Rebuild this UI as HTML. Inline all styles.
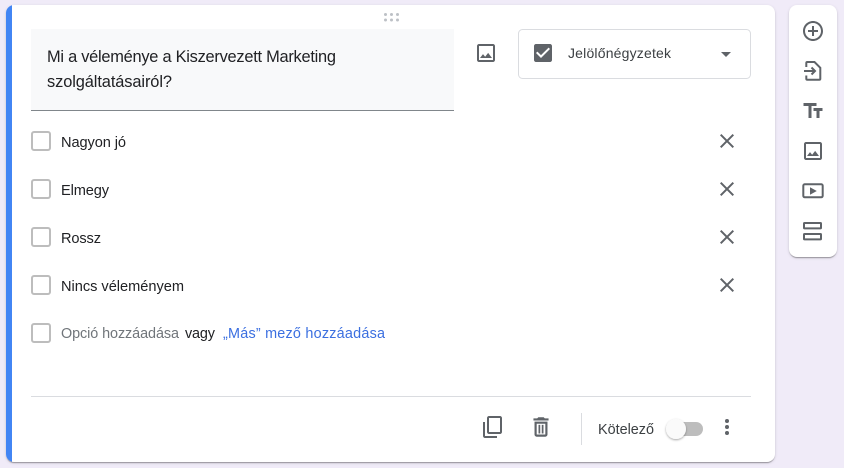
<!DOCTYPE html>
<html lang="hu"><head><meta charset="utf-8"><title>Kérdés</title>
<style>
html,body{margin:0;padding:0;width:844px;height:468px;overflow:hidden;background:#f0ebf8}
.card{position:absolute;left:6px;top:5px;width:769px;height:457px;background:#fff;border-radius:8px;overflow:hidden;box-shadow:0 2px 1px -1px rgba(0,0,0,.2),0 1px 1px 0 rgba(0,0,0,.14),0 1px 3px 0 rgba(0,0,0,.12)}
.blue{position:absolute;left:0;top:0;bottom:0;width:6px;background:#4285f4}
.side{position:absolute;left:789px;top:5px;width:48px;height:252px;background:#fff;border-radius:8px;box-shadow:0 2px 1px -1px rgba(0,0,0,.2),0 1px 1px 0 rgba(0,0,0,.14),0 1px 3px 0 rgba(0,0,0,.12)}
svg{position:absolute;left:0;top:0}
text{font-family:"Liberation Sans",sans-serif}
.o{font-size:14.6px;fill:#202124}
</style></head><body>
<div class="card"><div class="blue"></div></div>
<div class="side"></div>
<svg width="844" height="468" viewBox="0 0 844 468" xmlns="http://www.w3.org/2000/svg">
<defs>
<path id="img" d="M19 5v14H5V5h14m0-2H5c-1.1 0-2 .9-2 2v14c0 1.1.9 2 2 2h14c1.1 0 2-.9 2-2V5c0-1.1-.9-2-2-2zm-4.86 8.86l-3 3.87L9 13.14 6 17h12l-3.86-5.14z"/>
<path id="x" d="M19 6.41L17.59 5 12 10.59 6.41 5 5 6.41 10.59 12 5 17.59 6.41 19 12 13.41 17.59 19 19 17.59 13.41 12z"/>
<filter id="sh" x="-50%" y="-50%" width="200%" height="200%"><feDropShadow dx="0" dy="1" stdDeviation="1" flood-color="#000" flood-opacity=".35"/></filter>
</defs>
<g fill="#bdc1c6"><circle cx="385.5" cy="14.5" r="1.5"/><circle cx="391.5" cy="14.5" r="1.5"/><circle cx="397.5" cy="14.5" r="1.5"/><circle cx="385.5" cy="20" r="1.5"/><circle cx="391.5" cy="20" r="1.5"/><circle cx="397.5" cy="20" r="1.5"/></g>
<rect x="31" y="29" width="423" height="81" fill="#f8f9fa"/>
<rect x="31" y="110" width="423" height="1" fill="#80868b"/>
<text x="47" y="62" font-size="16.4" fill="#202124" textLength="289">Mi a véleménye a Kiszervezett Marketing</text>
<text x="47" y="87" font-size="16.4" fill="#202124" textLength="125">szolgáltatásairól?</text>
<use href="#img" x="474" y="41" fill="#5f6368"/>
<rect x="518.5" y="29.5" width="232" height="49" rx="4" fill="#fff" stroke="#dadce0"/>
<path transform="translate(531 41)" fill="#5f6368" d="M19 3H5c-1.11 0-2 .9-2 2v14c0 1.1.89 2 2 2h14c1.11 0 2-.9 2-2V5c0-1.1-.89-2-2-2zm-9 14l-5-5 1.41-1.41L10 14.17l7.59-7.59L19 8l-9 9z"/>
<text x="568" y="58" font-size="14" fill="#3c4043" textLength="103">Jelölőnégyzetek</text>
<path d="M721 52h10l-5 5z" fill="#5f6368"/>
<g fill="#fff" stroke="#bdbdbd" stroke-width="2">
<rect x="32" y="132" width="18" height="18" rx="2"/>
<rect x="32" y="180" width="18" height="18" rx="2"/>
<rect x="32" y="228" width="18" height="18" rx="2"/>
<rect x="32" y="276" width="18" height="18" rx="2"/>
<rect x="32" y="324" width="18" height="18" rx="2"/>
</g>
<text class="o" x="61" y="147" textLength="65">Nagyon jó</text>
<text class="o" x="61" y="195" textLength="48">Elmegy</text>
<text class="o" x="61" y="243" textLength="40">Rossz</text>
<text class="o" x="61" y="291" textLength="123">Nincs véleményem</text>
<text x="61" y="338" font-size="14.4" fill="#70757a" textLength="118">Opció hozzáadása</text>
<text x="185" y="338" font-size="14.4" fill="#202124" textLength="30">vagy</text>
<text x="223" y="338" font-size="14.4" fill="#3b6fe0" textLength="162">„Más” mező hozzáadása</text>
<g fill="#5f6368">
<use href="#x" x="715" y="129"/><use href="#x" x="715" y="177"/><use href="#x" x="715" y="225"/><use href="#x" x="715" y="273"/>
</g>
<rect x="31" y="396" width="720" height="1" fill="#dadce0"/>
<path transform="translate(481 439) scale(1 -1)" fill="#5f6368" d="M16 1H4c-1.1 0-2 .9-2 2v14h2V3h12V1zm3 4H8c-1.1 0-2 .9-2 2v14c0 1.1.9 2 2 2h11c1.1 0 2-.9 2-2V7c0-1.1-.9-2-2-2zm0 16H8V7h11v14z"/>
<g transform="translate(541 427) scale(1.08) translate(-12 -12)" fill="#5f6368">
<path d="M6 19c0 1.1.9 2 2 2h8c1.1 0 2-.9 2-2V7H6v12zM8 9h8v10H8V9zm7.5-5l-1-1h-5l-1 1H5v2h14V4h-3.5z"/>
<rect x="9.7" y="10" width="1.6" height="8"/><rect x="12.7" y="10" width="1.6" height="8"/>
</g>
<rect x="581" y="413" width="1" height="32" fill="#dadce0"/>
<text x="598" y="434" font-size="14.4" fill="#3c4043" textLength="56">Kötelező</text>
<rect x="677" y="422" width="26" height="14" rx="7" fill="#bdbdbd"/>
<circle cx="676" cy="429" r="10" fill="#fafafa" filter="url(#sh)"/>
<g fill="#5f6368"><circle cx="727" cy="421" r="2"/><circle cx="727" cy="427" r="2"/><circle cx="727" cy="433" r="2"/></g>
<path transform="translate(801 19)" fill="#5f6368" d="M13 7h-2v4H7v2h4v4h2v-4h4v-2h-4V7zm-1-5C6.48 2 2 6.48 2 12s4.48 10 10 10 10-4.48 10-10S17.52 2 12 2zm0 18c-4.41 0-8-3.59-8-8s3.59-8 8-8 8 3.59 8 8-3.59 8-8 8z"/>
<g fill="none" stroke="#5f6368" stroke-width="2">
<path d="M806.3 67V63q0-1 1-1H814.5L820.3 67.8V78.7q0 1-1 1H807.3q-1 0-1-1V75.5"/>
<path d="M804 71H815M811.5 67.5L815 71L811.5 74.5"/>
</g>
<path transform="translate(801 99)" fill="#5f6368" d="M2.5 4v3h5v12h3V7h5V4h-13zm19 5h-9v3h3v7h3v-7h3V9z"/>
<use href="#img" x="801" y="139" fill="#5f6368"/>
<rect x="803.3" y="184.3" width="19.4" height="13" rx="1.5" fill="none" stroke="#5f6368" stroke-width="2"/>
<path d="M810 187.3l6.8 3.7-6.8 3.7z" fill="#5f6368"/>
<g fill="none" stroke="#5f6368" stroke-width="2">
<rect x="804" y="223" width="17" height="5.4" rx=".6"/>
<rect x="804" y="234" width="17" height="5.4" rx=".6"/>
</g>
</svg>
</body></html>
